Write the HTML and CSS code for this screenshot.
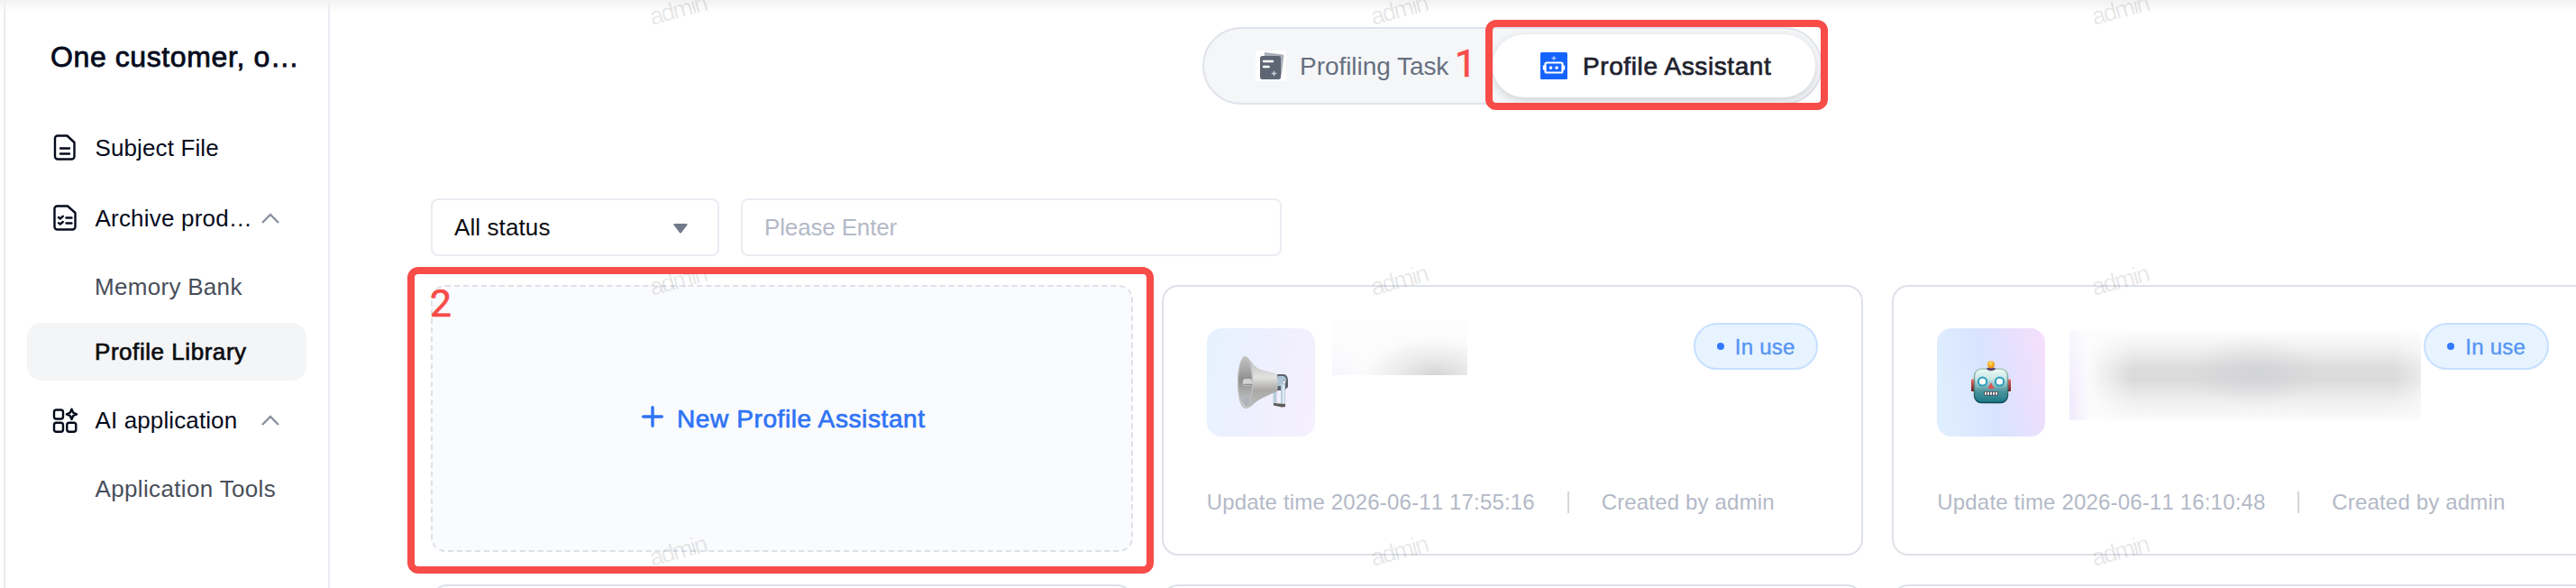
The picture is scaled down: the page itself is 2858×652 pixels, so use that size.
FILE: index.html
```html
<!DOCTYPE html>
<html lang="en">
<head>
<meta charset="utf-8">
<title>Profile Library</title>
<link rel="stylesheet" href="styles.css">
</head>
<body>
<div class="app">
  <aside class="sidebar">
    <h1 class="brand">One customer, o…</h1>
    <nav class="menu">
      <a class="item">
        <svg class="item-icon" viewBox="0 0 32 32"><path d="M7.500 2.500H18.500L26.500 10V25.500a3 3 0 0 1-3 3H8a3 3 0 0 1-3-3V5.500a3 3 0 0 1 3-3z"/><path d="M11 16.500h10M11 22.500h10"/></svg>
        <span class="label">Subject File</span>
      </a>
      <a class="item">
        <svg class="item-icon" viewBox="0 0 32 32"><path d="M7.500 2.500H19L27.500 10V25.500a3 3 0 0 1-3 3H7.500a3 3 0 0 1-3-3V5.500a3 3 0 0 1 3-3z"/><path d="M9 15l1.800 1.500 3-2.700M9 21.200l1.800 1.500 3-2.700M17.500 15.500h6M17.500 21.500h6"/></svg>
        <span class="label archive">Archive prod…</span>
        <svg class="chevron" viewBox="0 0 20 12"><path d="M1 11L10 2l9 9"/></svg>
      </a>
      <a class="sub memory">Memory Bank</a>
      <a class="sub active">Profile Library</a>
      <a class="item ai">
        <svg class="item-icon" viewBox="0 0 32 32"><rect x="4" y="4.500" width="10" height="10" rx="2.500"/><rect x="4" y="18.800" width="10" height="10" rx="2.500"/><rect x="18.300" y="18.800" width="10" height="10" rx="2.500"/><path d="M23.500 3.700l1.700 3.900 3.900 1.700-3.900 1.700-1.700 3.900-1.700-3.900-3.900-1.700 3.900-1.700z"/></svg>
        <span class="label">AI application</span>
        <svg class="chevron" viewBox="0 0 20 12"><path d="M1 11L10 2l9 9"/></svg>
      </a>
      <a class="sub tools">Application Tools</a>
    </nav>
  </aside>

  <main class="main">
    <div class="tabs">
      <div class="tab task">
        <svg class="tab-icon" viewBox="0 0 34 34"><rect width="34" height="34" fill="#fff"/><path d="M10 2l20 2.500a1.500 1.500 0 0 1 1.300 1.700L28.800 27 8 24z" fill="#a9aeb8"/><rect x="5" y="6" width="23" height="26" rx="2.500" fill="#5e6675"/><path d="M9 12h10M9 18h5.500" stroke="#fff" stroke-width="2.600" stroke-linecap="round"/><path d="M20.500 22l1.100 2.400 2.400 1.100-2.400 1.100-1.100 2.400-1.100-2.400-2.400-1.100 2.400-1.100z" fill="#c4c8d0"/></svg>
        <span>Profiling Task</span>
      </div>
      <div class="tab selected">
        <svg class="tab-icon bot" viewBox="0 0 30 30"><rect width="30" height="30" rx="1.500" fill="#1664ff"/><path d="M15 3.500l.9 2.100 2.100.9-2.100.9-.9 2.100-.9-2.100-2.100-.9 2.100-.9z" fill="#a9c6ff"/><rect x="5.500" y="11.500" width="19" height="11" rx="1.500" fill="none" stroke="#fff" stroke-width="2.200"/><path d="M4 14.500v5M26 14.500v5" stroke="#fff" stroke-width="2.400"/><rect x="10" y="15.500" width="3.200" height="3.200" rx="1" fill="#fff"/><rect x="16.500" y="15.500" width="3.200" height="3.200" rx="1" fill="#fff"/></svg>
        <span>Profile Assistant</span>
      </div>
      <div class="mark mark-tab"></div>
      <div class="step step-one">1</div>
    </div>

    <div class="filters">
      <div class="field select"><span>All status</span><svg class="caret" viewBox="0 0 16 11"><path d="M1.500 0h13a1 1 0 0 1 .8 1.700L9 9.900a1.300 1.300 0 0 1-2 0L.7 1.700A1 1 0 0 1 1.500 0z"/></svg></div>
      <div class="field search">Please Enter</div>
    </div>

    <div class="grid">
      <div class="slot">
        <div class="create">
          <svg class="plus" viewBox="0 0 24 24"><path d="M12 1.700v20.600M1.700 12h20.600"/></svg>
          <span>New Profile Assistant</span>
        </div>
        <div class="mark mark-card"></div>
        <div class="step step-two">2</div>
      </div>

      <article class="card">
        <div class="card-head">
          <div class="avatar soft">
            <svg viewBox="0 0 120 120">
              <defs>
                <linearGradient id="horn" x1="0" y1="0" x2="0" y2="1"><stop offset="0" stop-color="#b5b5b5"/><stop offset=".4" stop-color="#e2e2e1"/><stop offset=".65" stop-color="#aaa9a8"/><stop offset="1" stop-color="#bdbdbd"/></linearGradient>
                <linearGradient id="mouth" x1="0" y1="0" x2="0" y2="1"><stop offset="0" stop-color="#c4c3c2"/><stop offset=".45" stop-color="#8f8f90"/><stop offset="1" stop-color="#cfd0d4"/></linearGradient>
              </defs>
              <path d="M78 51h8q4 1 4 8v6l-4 4h-8z" fill="#5b6269"/>
              <path d="M79 53h6q3 1 3 5l-3 6h-6z" fill="#abc4d5"/>
              <path d="M73.500 70h4v15h-4zM82 60h5v25h-5z" fill="#b9cedc"/>
              <path d="M85 59v25" stroke="#eef6fb" stroke-width="1.500"/>
              <path d="M74 83l13 1v3l-4 .5-9-2z" fill="#5d5a58"/>
              <circle cx="85.500" cy="60" r="2" fill="#e8f2f8" stroke="#75828c" stroke-width=".6"/>
              <path d="M42 31c5 1 8 9 14 13 7 4 17 4 22 7q2 9 0 19c-7 3-15 6-21 10-6 4-9 9-15 9z" fill="url(#horn)"/>
              <ellipse cx="42.500" cy="60" rx="8" ry="28.500" fill="url(#mouth)" stroke="#c1c0bf" stroke-width="1.200"/>
              <path d="M39 80q5-8 9-1-2 8-5 8z" fill="#aeb2bc"/>
              <rect x="40" y="56" width="10" height="8" rx="3" fill="#d3d2d1"/>
              <path d="M41 62.500h9" stroke="#8c8b8a" stroke-width="1.500"/>
            </svg>
          </div>
          <div class="redacted short"></div>
          <div class="badge"><i></i><span>In use</span></div>
        </div>
        <div class="meta"><span class="time">Update time 2026-06-11 17:55:16</span><i></i><span>Created by admin</span></div>
      </article>

      <article class="card">
        <div class="card-head">
          <div class="avatar vivid">
            <svg viewBox="0 0 120 120">
              <defs>
                <linearGradient id="face" x1="0" y1="0" x2="0" y2="1"><stop offset="0" stop-color="#eafbf7"/><stop offset=".3" stop-color="#c9e6e4"/><stop offset=".65" stop-color="#4e969f"/><stop offset="1" stop-color="#197987"/></linearGradient>
                <linearGradient id="edge" x1="0" y1="0" x2="0" y2="1"><stop offset="0" stop-color="#a9c8b9"/><stop offset="1" stop-color="#0c4650"/></linearGradient>
                <linearGradient id="ear" x1="0" y1="0" x2="0" y2="1"><stop offset="0" stop-color="#f2685f"/><stop offset="1" stop-color="#651b21"/></linearGradient>
                <radialGradient id="bulb" cx=".45" cy=".35"><stop offset="0" stop-color="#ffe36b"/><stop offset="1" stop-color="#f39a17"/></radialGradient>
              </defs>
              <rect x="38" y="56.500" width="4" height="13.500" rx="1" fill="url(#ear)"/>
              <rect x="78" y="56.500" width="4" height="13.500" rx="1" fill="url(#ear)"/>
              <rect x="41.500" y="45" width="37" height="37.500" rx="8" fill="url(#face)" stroke="url(#edge)" stroke-width="1.500"/>
              <path d="M54.500 45q5.500-4 11 0-5.500 4.500-11 0z" fill="#5b4670"/>
              <circle cx="60" cy="40.200" r="4" fill="url(#bulb)"/>
              <circle cx="50.500" cy="59" r="4.600" fill="#fff" stroke="#2a9dbb" stroke-width="2"/>
              <circle cx="69.500" cy="59" r="4.600" fill="#fff" stroke="#2a9dbb" stroke-width="2"/>
              <path d="M60 60l3.700 7h-7.400z" fill="#df5356"/>
              <rect x="52" y="70" width="16" height="4.500" rx="1" fill="#4b4a50"/>
              <path d="M53 72.200h14" stroke="#f1eeee" stroke-width="3" stroke-dasharray="2 1"/>
            </svg>
          </div>
          <div class="redacted long"></div>
          <div class="badge"><i></i><span>In use</span></div>
        </div>
        <div class="meta"><span class="time">Update time 2026-06-11 16:10:48</span><i></i><span>Created by admin</span></div>
      </article>

      <div class="card"></div>
      <div class="card"></div>
      <div class="card"></div>
    </div>
  </main>

  <div class="watermarks">
    <span>admin</span><span>admin</span><span>admin</span>
    <span>admin</span><span>admin</span><span>admin</span>
    <span>admin</span><span>admin</span><span>admin</span>
  </div>
  <div class="topshade"></div>
</div>
</body>
</html>
```

FILE: styles.css
```css
* { box-sizing: border-box; }

body {
  margin: 0;
  background: #fff;
  font-family: "Liberation Sans", Arial, sans-serif;
  font-size: 26px;
  overflow: hidden;
}

.app {
  position: relative;
  display: flex;
  width: 2858px;
  height: 652px;
  overflow: hidden;
}

.sidebar {
  flex: none;
  width: 362px;
  height: 652px;
  margin-left: 4px;
  padding: 43px 24px 0;
  border-left: 2px solid #ebebf3;
  border-right: 2px solid #ebebf3;
  color: #060b1c;
}

.brand {
  margin: 0 0 61px;
  padding-left: 26px;
  font-size: 32px;
  line-height: 40px;
  font-weight: 400;
  letter-spacing: 0.6px;
  white-space: nowrap;
  -webkit-text-stroke: 0.8px currentColor;
}

.menu { display: flex; flex-direction: column; }

.item {
  display: flex;
  align-items: center;
  height: 40px;
  margin-bottom: 38px;
  padding-left: 26px;
  white-space: nowrap;
}

.item-icon {
  flex: none;
  width: 32px;
  height: 32px;
  margin-right: 17.5px;
  fill: none;
  stroke: #060b1c;
  stroke-width: 2.4;
  stroke-linecap: round;
  stroke-linejoin: round;
}

.label { width: 184.500px; letter-spacing: 0.12px; }
.archive { letter-spacing: 0.2px; }

.chevron {
  width: 20px;
  height: 12px;
  fill: none;
  stroke: #8a919f;
  stroke-width: 2.4;
}

.sub {
  display: flex;
  align-items: center;
  height: 64px;
  padding-left: 75px;
  color: #484e5a;
  white-space: nowrap;
}

.memory { margin: -14px 0 8px; letter-spacing: 0.3px; }
.tools { margin-top: -12px; padding-left: 75.500px; letter-spacing: 0.35px; }

.active {
  width: 310px;
  border-radius: 16px;
  background: #f4f5f7;
  color: #0c0d0f;
  letter-spacing: 0.55px;
  -webkit-text-stroke: 0.7px currentColor;
}

.ai { margin: 24px 0 36px; }

.main { flex: none; width: 2512px; padding: 30px 0 0 112px; }

.tabs {
  position: relative;
  display: flex;
  align-items: center;
  width: 688px;
  height: 86px;
  margin-left: 856px;
  border: 2px solid #e1e3eb;
  border-radius: 43px;
  background: #f5f6f8;
  font-size: 28px;
  white-space: nowrap;
}

.tab { display: flex; align-items: center; }
.task { width: 320px; padding-left: 57px; color: #667080; }
.task span { margin: 1px 0 0 15px; letter-spacing: -0.05px; }
.tab-icon { flex: none; width: 34px; height: 34px; }

.selected {
  width: 358px;
  height: 70px;
  padding-left: 53px;
  border-radius: 35px;
  background: #fff;
  box-shadow: 0 3px 10px rgba(20, 25, 40, 0.16);
  color: #1e222d;
  letter-spacing: 0.6px;
  -webkit-text-stroke: 0.7px currentColor;
}

.bot { width: 30px; height: 30px; -webkit-text-stroke: 0; }
.selected span { margin: 1px 0 0 17px; }

.mark {
  position: absolute;
  z-index: 3;
  border: 8px solid #f74c48;
  border-radius: 12px;
}

.mark-tab { left: 312px; top: -10px; width: 380px; height: 100px; }
.mark-card { left: -26px; top: -20px; width: 828px; height: 340px; }

.step {
  position: absolute;
  z-index: 3;
  color: #f74c48;
  font-family: Roboto, sans-serif;
  font-size: 42.500px;
  line-height: 50px;
  -webkit-text-stroke: 0.7px currentColor;
}

.step-one { left: 278px; top: 14px; }
.step-two { left: -1px; top: -4px; }

.filters { display: flex; gap: 24px; margin: 104px 0 32px; }

.field {
  display: flex;
  align-items: center;
  height: 64px;
  padding: 0 24px;
  border: 2px solid #ebecf2;
  border-radius: 8px;
}

.select {
  justify-content: space-between;
  width: 320px;
  padding-right: 33px;
  color: #0c0d0f;
  letter-spacing: 0.1px;
}

.caret { width: 16px; height: 11px; margin-top: 2px; fill: #717a8a; }
.search { width: 600px; color: #b3b9c7; letter-spacing: -0.15px; }

.grid {
  display: grid;
  grid-template-columns: repeat(3, 1fr);
  grid-auto-rows: 300px;
  gap: 32px;
  width: 2400px;
}

.slot { position: relative; }

.create {
  display: flex;
  align-items: center;
  justify-content: center;
  gap: 15px;
  height: 296px;
  border: 2px dashed #dde1e8;
  border-radius: 16px;
  background: #fafbfd;
  color: #2f73f6;
  font-size: 28px;
  letter-spacing: 0.6px;
  -webkit-text-stroke: 0.7px currentColor;
}

.create span { margin: 1px -4px 0 0; }

.plus {
  width: 24px;
  height: 24px;
  margin-top: -4px;
  fill: none;
  stroke: #2f73f6;
  stroke-width: 3.4;
  stroke-linecap: round;
}

.card {
  padding: 40px 48px 0;
  border: 2px solid #dde1e9;
  border-radius: 18px;
}

.card-head { display: flex; align-items: flex-start; height: 179px; }
.avatar { flex: none; width: 120px; height: 120px; margin-top: 6px; border-radius: 16px; }
.avatar svg { display: block; width: 120px; height: 120px; }
.soft { background: linear-gradient(105deg, #e5f2ff, #f0effe 58%, #f6f0fe); }
.vivid { background: linear-gradient(78deg, #e1f0ff, #d8e4ff 48%, #e6e0fe 72%, #f6e0fc); }

.redacted { flex: none; }

.short {
  width: 150px;
  height: 60px;
  margin: -2px 0 0 19px;
  background:
    radial-gradient(ellipse 105px 56px at 114px 62px, rgba(208, 209, 210, 0.95), rgba(228, 228, 229, 0.7) 40%, rgba(247, 247, 247, 0.3) 75%, rgba(250, 250, 250, 0)),
    radial-gradient(ellipse 40px 40px at 0 60px, #f7f5fe, #fdfdfd);
}

.long {
  width: 390px;
  height: 100px;
  margin: 8px 0 0 27px;
  background:
    radial-gradient(ellipse 24px 110px at 0 80px, rgba(238, 232, 252, 0.9), rgba(250, 248, 255, 0)),
    radial-gradient(ellipse 70px 40px at 205px 46px, rgba(200, 202, 206, 0.45), rgba(215, 215, 216, 0)),
    linear-gradient(90deg, #fdfdfe 18px, rgba(253, 253, 254, 0) 70px, rgba(253, 253, 254, 0) 360px, rgba(253, 253, 254, 0.5)),
    linear-gradient(#fdfdfd, #f1f1f1 20%, #dcdcdd 42%, #dadadb 55%, #efeff0 78%, #fbfbfb);
}

.badge {
  display: flex;
  align-items: center;
  gap: 12px;
  flex: none;
  width: 138.500px;
  height: 52px;
  margin-left: auto;
  padding-left: 24px;
  border: 2px solid #c6e0ff;
  border-radius: 26px;
  background: #e7f3ff;
  color: #5595f5;
  font-size: 24px;
  letter-spacing: 0.25px;
  white-space: nowrap;
  -webkit-text-stroke: 0.4px currentColor;
}

.long + .badge { margin-right: 0; margin-left: 3px; }
.badge i { width: 8px; height: 8px; border-radius: 50%; background: #3378ff; }
.badge span { margin-top: 1px; }

.meta {
  display: flex;
  align-items: center;
  height: 40px;
  color: #b3b9c7;
  font-size: 24px;
  letter-spacing: 0.17px;
  font-kerning: none;
  white-space: nowrap;
}

.time { width: 364px; }
.meta i { width: 2px; height: 24px; margin: 0 36px 0 36px; background: #d5d6d9; }

.watermarks {
  position: absolute;
  inset: -5px auto auto 720px;
  z-index: 2;
  display: grid;
  grid-template-columns: repeat(3, 800px);
  grid-auto-rows: 300px;
  pointer-events: none;
}

.watermarks span {
  justify-self: start;
  align-self: start;
  font-size: 27px;
  line-height: 32px;
  letter-spacing: -1.9px;
  color: rgba(0, 0, 0, 0.1);
  transform: rotate(-15deg);
}

.topshade {
  position: absolute;
  inset: 0 0 auto 0;
  z-index: 1;
  height: 14px;
  background: linear-gradient(#f2f2f2, rgba(255, 255, 255, 0));
}
```
